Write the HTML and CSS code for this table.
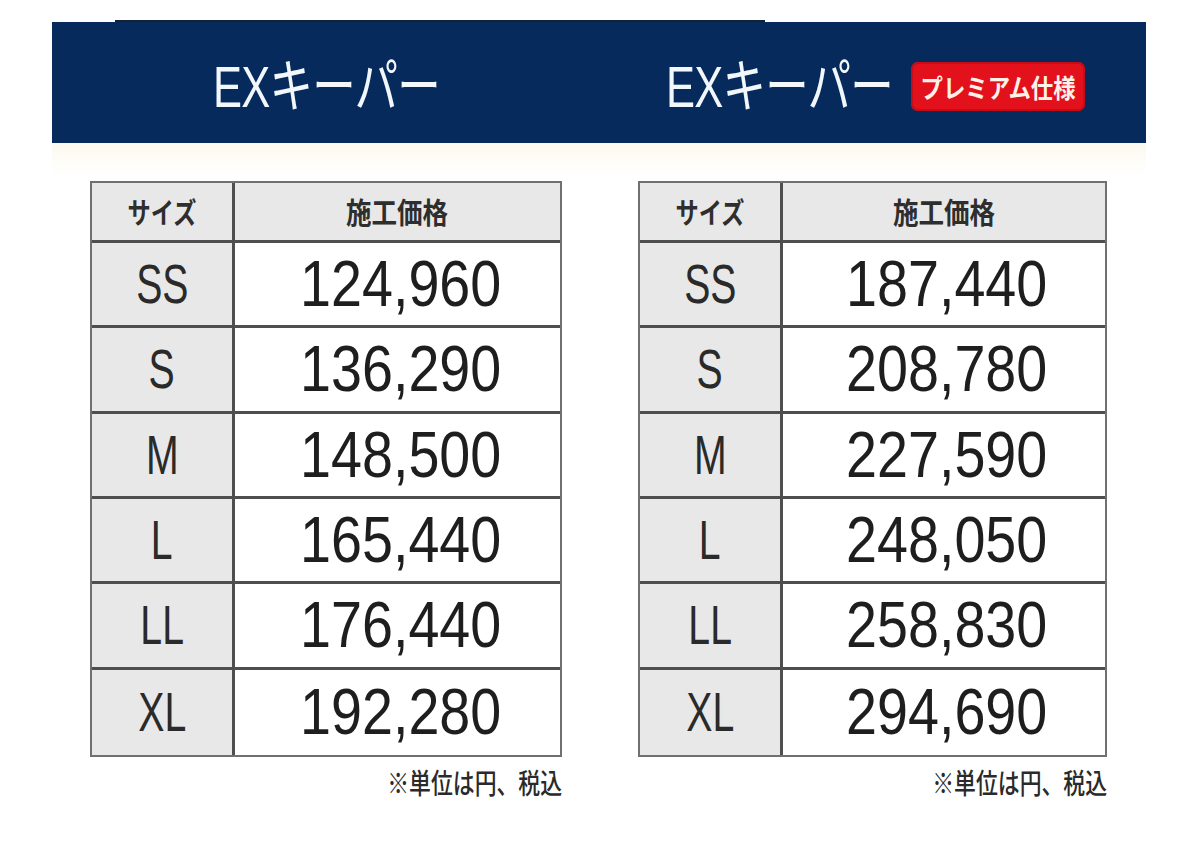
FILE: index.html
```html
<!DOCTYPE html>
<html lang="ja">
<head>
<meta charset="utf-8">
<title>EXキーパー 施工価格</title>
<link rel="stylesheet" href="styles.css">
</head>
<body>
<div class="page">
  <div class="topline"></div>
  <header class="band">
    <div class="band-col">
      <h1 class="title"><span class="title-inner">EXキーパー</span></h1>
    </div>
    <div class="band-col">
      <h1 class="title"><span class="title-inner">EXキーパー</span></h1>
      <span class="badge"><span class="badge-inner">プレミアム仕様</span></span>
    </div>
  </header>
  <div class="fade"></div>
  <main class="tables">
    <section class="col">
      <div class="ptable">
        <div class="cell head size"><span class="hs">サイズ</span></div>
        <div class="cell head price"><span class="hp">施工価格</span></div>
        <div class="cell size"><span class="lab">SS</span></div><div class="cell price"><span class="num">124,960</span></div>
        <div class="cell size"><span class="lab">S</span></div><div class="cell price"><span class="num">136,290</span></div>
        <div class="cell size"><span class="lab">M</span></div><div class="cell price"><span class="num">148,500</span></div>
        <div class="cell size"><span class="lab">L</span></div><div class="cell price"><span class="num">165,440</span></div>
        <div class="cell size"><span class="lab">LL</span></div><div class="cell price"><span class="num">176,440</span></div>
        <div class="cell size last"><span class="lab">XL</span></div><div class="cell price last"><span class="num">192,280</span></div>
      </div>
      <p class="note"><span class="note-inner">※単位は円、税込</span></p>
    </section>
    <section class="col">
      <div class="ptable">
        <div class="cell head size"><span class="hs">サイズ</span></div>
        <div class="cell head price"><span class="hp">施工価格</span></div>
        <div class="cell size"><span class="lab">SS</span></div><div class="cell price"><span class="num">187,440</span></div>
        <div class="cell size"><span class="lab">S</span></div><div class="cell price"><span class="num">208,780</span></div>
        <div class="cell size"><span class="lab">M</span></div><div class="cell price"><span class="num">227,590</span></div>
        <div class="cell size"><span class="lab">L</span></div><div class="cell price"><span class="num">248,050</span></div>
        <div class="cell size"><span class="lab">LL</span></div><div class="cell price"><span class="num">258,830</span></div>
        <div class="cell size last"><span class="lab">XL</span></div><div class="cell price last"><span class="num">294,690</span></div>
      </div>
      <p class="note"><span class="note-inner">※単位は円、税込</span></p>
    </section>
  </main>
</div>
</body>
</html>
```
FILE: styles.css
```css
* { box-sizing: border-box; }
html, body { margin: 0; padding: 0; background: #ffffff; }
body { font-family: "Liberation Sans", "Noto Sans CJK JP", sans-serif; }

.page {
  width: 1094px;
  margin: 20px 0 0 52px;
}
.topline {
  width: 650px;
  height: 2px;
  margin-left: 63px;
  background: #15203a;
}
.band {
  height: 121px;
  background: #062a5c;
  display: grid;
  grid-template-columns: 472px 469px;
  column-gap: 76px;
  padding: 0 39px 0 38px;
  align-items: center;
}
.band-col {
  display: flex;
  justify-content: center;
  align-items: center;
  gap: 19px;
  padding-top: 8px;
}
.band-col + .band-col { padding-left: 6px; }
.title {
  margin: 0;
  width: 226px;
  white-space: nowrap;
  font-family: "Liberation Sans", "Noto Sans CJK JP", sans-serif;
  font-weight: 400;
  font-size: 58px;
  line-height: 60px;
  color: #f2f7fc;
}
.title-inner {
  display: inline-block;
  transform: scaleX(0.75);
  transform-origin: left center;
  letter-spacing: -1px;
}
.badge {
  width: 174px;
  height: 49px;
  border-radius: 7px;
  background: #e2111c;
  box-shadow: inset 0 0 0 2px #c60c16;
  display: flex;
  justify-content: center;
  align-items: center;
  font-family: "Noto Sans CJK JP", sans-serif;
  font-weight: 700;
  font-size: 26px;
  color: #fff1e8;
  white-space: nowrap;
}
.badge-inner {
  display: inline-block;
  transform: scaleX(0.86);
}
.fade {
  height: 38px;
  background: linear-gradient(#fbf9ef, #ffffff 85%);
}

.tables {
  display: grid;
  grid-template-columns: 472px 469px;
  column-gap: 76px;
  padding: 0 39px 0 38px;
}
.col { display: flex; flex-direction: column; }
.ptable {
  display: grid;
  grid-template-columns: 143px 1fr;
  grid-template-rows: 60px repeat(6, 1fr);
  height: 576px;
  border: 2px solid #707070;
}
.cell {
  display: flex;
  justify-content: center;
  align-items: center;
  border-bottom: 3px solid #4e4e4e;
  overflow: visible;
}
.cell.last { border-bottom: none; }
.cell.size {
  background: #e8e8e8;
  border-right: 3px solid #4e4e4e;
}
.cell.price { background: #ffffff; }
.cell.head { background: #e8e8e8; }

.hs, .hp {
  display: inline-block;
  font-family: "Noto Sans CJK JP", sans-serif;
  font-weight: 700;
  font-size: 29px;
  line-height: 1;
  color: #2e2e2e;
}
.hs { transform: scaleX(0.8); }
.hp { transform: scaleX(0.88); }

.lab {
  display: inline-block;
  font-size: 56px;
  line-height: 1;
  color: #2a2a2a;
  transform: scaleX(0.7);
}
.num {
  display: inline-block;
  font-size: 64px;
  line-height: 1;
  color: #1e1e1e;
  transform: scaleX(0.87);
  margin-left: 6px;
}

.note {
  margin: 10px 0 0;
  text-align: right;
  font-family: "Noto Sans CJK JP", sans-serif;
  font-weight: 500;
  font-size: 28px;
  line-height: 30px;
  color: #2a2a2a;
  white-space: nowrap;
}
.note-inner {
  display: inline-block;
  transform: scaleX(0.78);
  transform-origin: right center;
}
```
